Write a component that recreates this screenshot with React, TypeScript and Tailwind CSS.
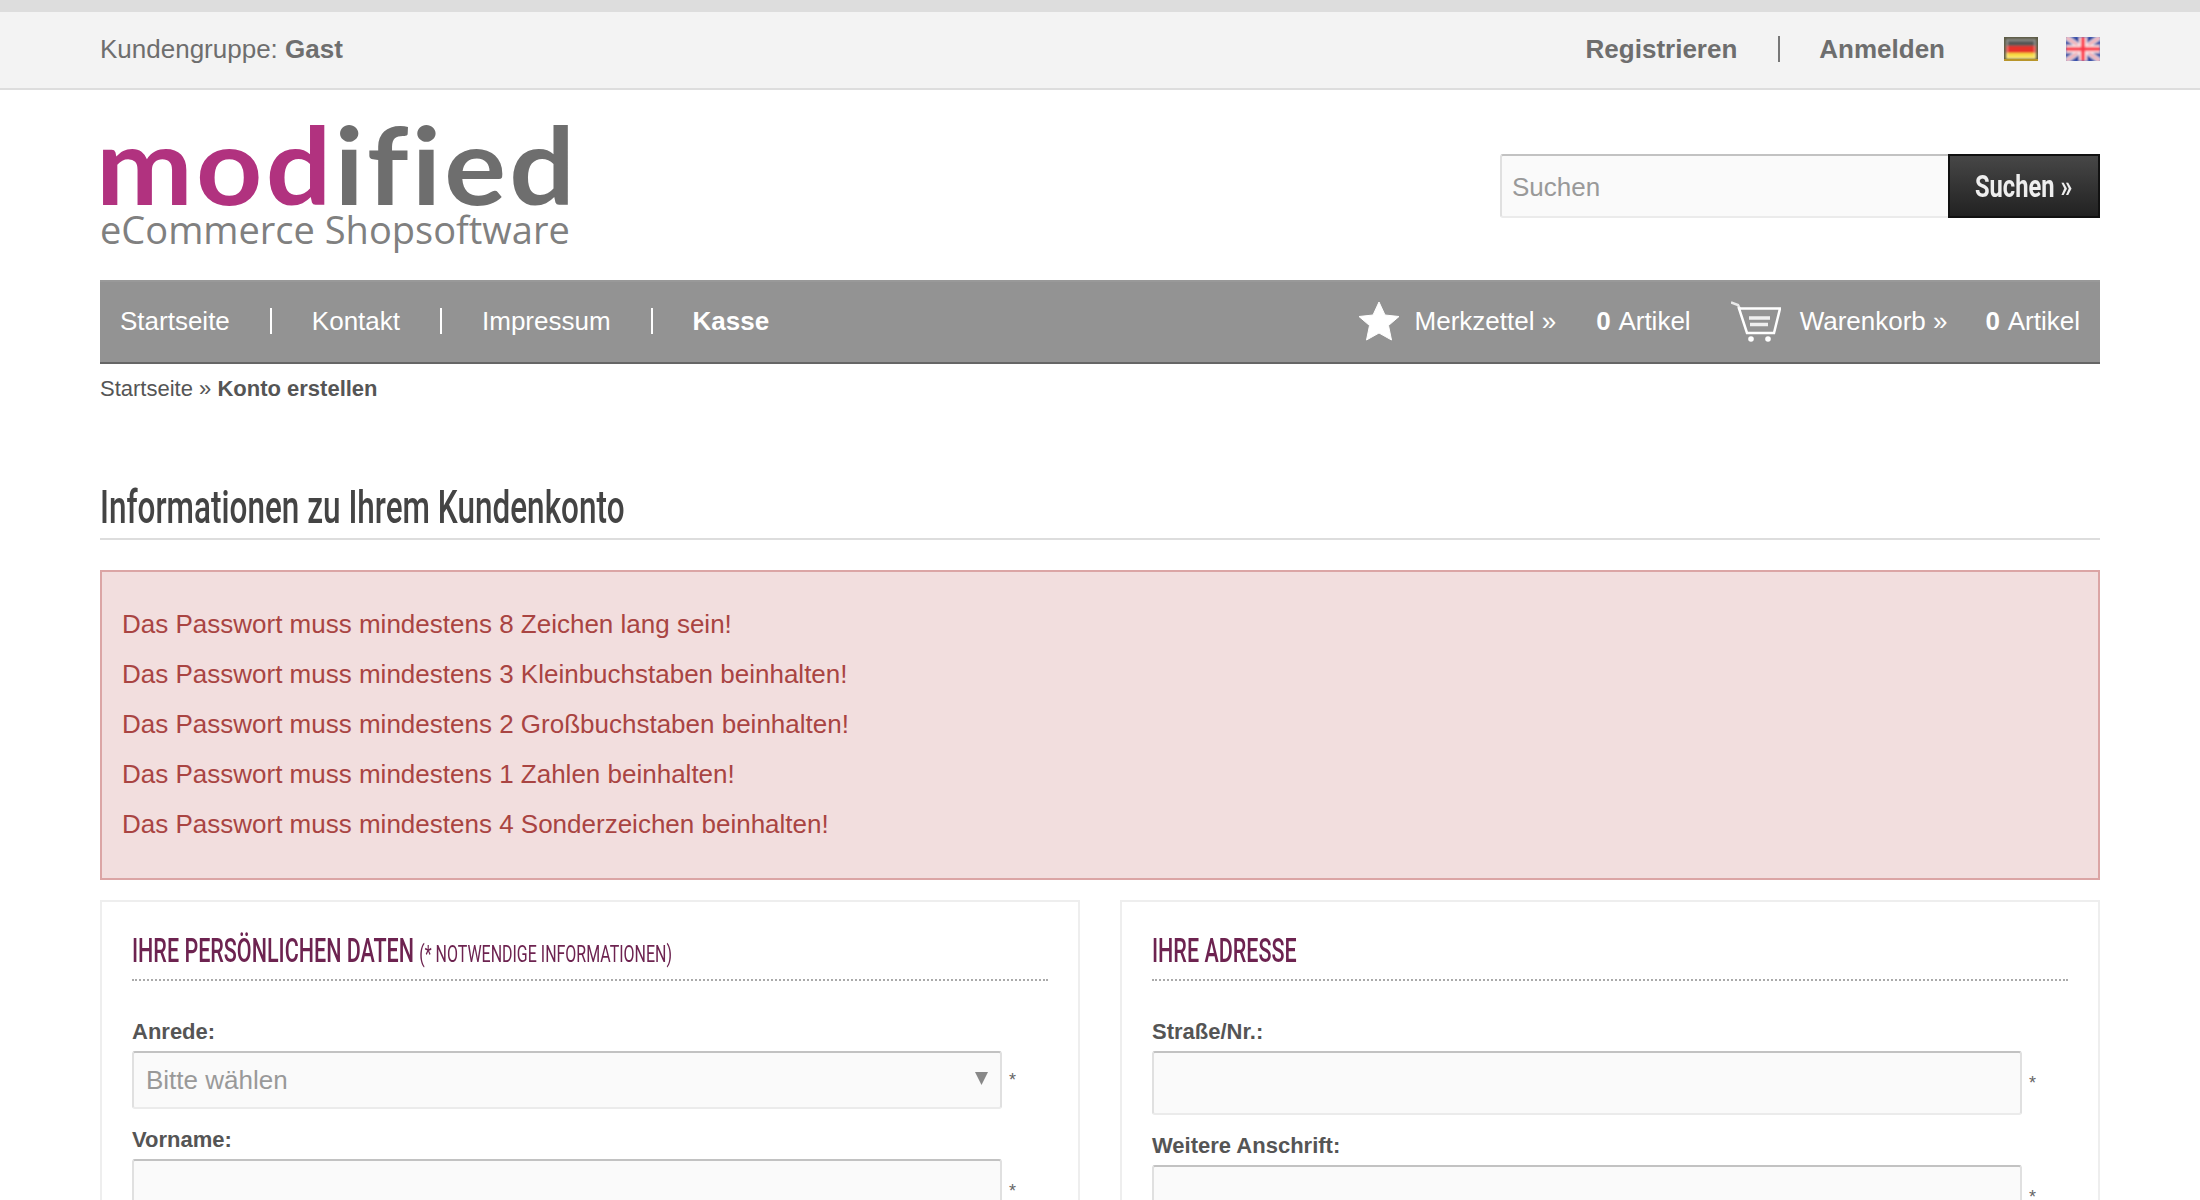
import React from 'react';

const sans = "font-['Liberation_Sans',Arial,sans-serif]";
const condensed = "font-['Roboto',sans-serif] inline-block origin-left whitespace-nowrap";

function FlagDe() {
  return (
    <svg width="34" height="24" viewBox="0 0 34 24">
      <defs>
        <filter id="soft-de"><feGaussianBlur stdDeviation="0.8" /></filter>
      </defs>
      <rect width="34" height="24" fill="#5c5a44" />
      <g filter="url(#soft-de)">
        <rect x="2" y="2" width="30" height="7" fill="#565654" />
        <rect x="2" y="9" width="30" height="7" fill="#e8312a" />
        <rect x="2" y="16" width="30" height="6" fill="#f8dc45" />
        <rect x="3" y="3" width="28" height="18" fill="none" stroke="#fff" strokeOpacity="0.45" strokeWidth="1.5" />
      </g>
      <rect y="22" width="34" height="2" fill="#b8952a" />
    </svg>
  );
}

function FlagGb() {
  return (
    <svg width="34" height="24" viewBox="0 0 34 24">
      <defs>
        <filter id="soft-gb" x="0" y="0" width="1" height="1"><feGaussianBlur stdDeviation="1" /></filter>
      </defs>
      <rect width="34" height="24" fill="#5a73c4" />
      <g filter="url(#soft-gb)">
        <rect width="34" height="24" fill="#24409e" />
        <path d="M0 0L34 24M34 0L0 24" stroke="#f3e6ea" strokeWidth="5" />
        <path d="M0 0L34 24M34 0L0 24" stroke="#f0707c" strokeWidth="1.5" />
        <path d="M17 0V24M0 12H34" stroke="#f7dfe2" strokeWidth="8" />
        <path d="M17 0V24M0 12H34" stroke="#fb3b4c" strokeWidth="4" />
      </g>
    </svg>
  );
}

function StarIcon() {
  return (
    <svg width="42" height="40" viewBox="0 0 42 40" className="shrink-0">
      <path
        d="M21 1L27 14L41 15.500L30.500 24.500L33.500 39L21 32L8.500 39L11.500 24.500L1 15.500L15 14Z"
        fill="#fff"
        stroke="#fff"
        strokeLinejoin="round"
      />
    </svg>
  );
}

function CartIcon() {
  return (
    <svg width="50" height="41" viewBox="0 0 50 41" className="shrink-0" fill="none" stroke="#fff">
      <path d="M0 1.500L7 4L9 8" strokeWidth="2.500" opacity="0.8" />
      <path d="M8 7.500H49L43 32H16Z" strokeWidth="2.500" />
      <path d="M18 17H39M19 23.500H37" strokeWidth="3.500" opacity="0.85" />
      <circle cx="20" cy="38" r="2.800" fill="#fff" stroke="none" />
      <circle cx="37" cy="38" r="2.800" fill="#fff" stroke="none" />
    </svg>
  );
}

const boxBorder = 'rounded-[3px] border-2 border-t-[#c2c2c2] border-x-[#e0e0e0] border-b-[#ebebeb] bg-[#fafafa]';

function Field({ label, gap, select }: { label: string; gap: string; select?: boolean }) {
  return (
    <div className={gap}>
      <label className="block text-[22px] leading-[26px] font-bold text-[#555]">{label}</label>
      <div className="mt-[6px] flex items-center">
        {select ? (
          <div className="relative">
            <select className={`${boxBorder} h-[58px] w-[870px] appearance-none px-[12px] text-[26px] text-[#999]`}>
              <option>Bitte wählen</option>
            </select>
            <svg width="13" height="13" viewBox="0 0 13 13" className="absolute top-[21px] right-[14px]">
              <polygon points="0,0 13,0 6.500,13" fill="#888" />
            </svg>
          </div>
        ) : (
          <input className={`${boxBorder} h-[64px] w-[870px]`} />
        )}
        <span className="ml-[7px] text-[18px] leading-none text-[#666]">*</span>
      </div>
    </div>
  );
}

function CardTitle({ title, note }: { title: string; note?: string }) {
  return (
    <div className="h-[48px] border-b-2 border-dotted border-[#aaa]">
      <h2 className={`${condensed} scale-x-[0.652] text-[33px] leading-[36px] font-medium text-[#6d2350]`}>
        {title}
        {note && <span className="ml-[8px] text-[24.500px] font-normal">{note}</span>}
      </h2>
    </div>
  );
}

const errors = [
  'Das Passwort muss mindestens 8 Zeichen lang sein!',
  'Das Passwort muss mindestens 3 Kleinbuchstaben beinhalten!',
  'Das Passwort muss mindestens 2 Großbuchstaben beinhalten!',
  'Das Passwort muss mindestens 1 Zahlen beinhalten!',
  'Das Passwort muss mindestens 4 Sonderzeichen beinhalten!',
];

export default function App() {
  return (
    <div className={`${sans} h-[1200px] overflow-hidden bg-white text-[26px] text-[#555]`}>
      <div className="h-[12px] bg-[#dddddd]" />
      <div className="h-[78px] border-b-2 border-[#dddddd] bg-[#f3f3f3]">
        <div className="mx-[100px] flex h-[76px] items-center justify-between pb-[2px]">
          <div className="text-[#6e6e6e]">
            Kundengruppe: <b>Gast</b>
          </div>
          <div className="flex items-center font-bold text-[#6e6e6e]">
            <a>Registrieren</a>
            <span className="ml-[41px] mr-[39px] h-[26px] w-[2px] bg-[#777]" />
            <a>Anmelden</a>
            <span className="ml-[59px] mr-[28px] flex"><FlagDe /></span>
            <span className="flex"><FlagGb /></span>
          </div>
        </div>
      </div>

      <div className="mx-[100px]">
        <div className="flex h-[190px] items-start justify-between">
          <div className="w-[480px] pt-[28px]">
            <div className="ml-[-4px] h-[91px] origin-left scale-x-[1.08] whitespace-nowrap font-['Lato',sans-serif] text-[107px] leading-[91px] font-bold tracking-[3px] [font-variant-ligatures:none]">
              <span className="text-[#b1327f]">mod</span>
              <span className="text-[#6e6e6e]">ified</span>
            </div>
            <div className="whitespace-nowrap font-['Open_Sans',sans-serif] text-[38px] leading-[40px] text-[#808080]">
              eCommerce Shopsoftware
            </div>
          </div>
          <div className="mt-[64px] flex h-[64px]">
            <input
              placeholder="Suchen"
              className="h-[64px] w-[448px] rounded-l-[3px] border-2 border-t-[#c2c2c2] border-l-[#e0e0e0] border-b-[#ebebeb] border-r-0 bg-[#fafafa] px-[10px] pt-[2px] text-[26px] placeholder:text-[#999]"
            />
            <button className="h-[64px] w-[152px] overflow-hidden border-2 border-[#111] bg-gradient-to-b from-[#474747] to-[#222222] pl-[25px] text-left text-[#eee]">
              <span className={`${condensed} scale-x-[0.74] text-[32px] font-bold`}>Suchen »</span>
            </button>
          </div>
        </div>

        <nav className="flex h-[84px] items-center justify-between border-t-2 border-b-2 border-t-[#999] border-b-[#666] bg-[#939393] px-[20px] pb-[2px] text-white">
          <div className="flex items-center">
            <a>Startseite</a>
            <span className="mx-[40px] h-[26px] w-[2px] bg-white" />
            <a>Kontakt</a>
            <span className="mx-[40px] h-[26px] w-[2px] bg-white" />
            <a>Impressum</a>
            <span className="mx-[40px] h-[26px] w-[2px] bg-white" />
            <a className="font-bold">Kasse</a>
          </div>
          <div className="flex items-center">
            <StarIcon />
            <a className="ml-[15px]">Merkzettel »</a>
            <span className="ml-[40px]"><b className="mr-[2px]">0</b> Artikel</span>
            <span className="ml-[40px] flex"><CartIcon /></span>
            <a className="ml-[19px]">Warenkorb »</a>
            <span className="ml-[38px]"><b className="mr-[2px]">0</b> Artikel</span>
          </div>
        </nav>

        <div className="mt-[12px] text-[22px] leading-[26px] text-[#555]">
          Startseite » <b>Konto erstellen</b>
        </div>

        <div className="mt-[81px] h-[57px] border-b-2 border-[#dddddd]">
          <h1 className={`${condensed} scale-x-[0.685] text-[46px] leading-[48px] font-medium text-[#444]`}>
            Informationen zu Ihrem Kundenkonto
          </h1>
        </div>

        <div className="mt-[30px] h-[310px] border-2 border-[#dba5a5] bg-[#f2dede] px-[20px] pt-[27px] text-[#a94442]">
          {errors.map((e) => (
            <p key={e} className="h-[50px] leading-[50px]">{e}</p>
          ))}
        </div>

        <div className="mt-[20px] flex justify-between">
          <div className="h-[400px] w-[980px] border-2 border-[#eeeeee] px-[30px] pt-[31px]">
            <CardTitle title="IHRE PERSÖNLICHEN DATEN" note="(* NOTWENDIGE INFORMATIONEN)" />
            <Field label="Anrede:" select gap="mt-[38px]" />
            <Field label="Vorname:" gap="mt-[18px]" />
          </div>
          <div className="h-[400px] w-[980px] border-2 border-[#eeeeee] px-[30px] pt-[31px]">
            <CardTitle title="IHRE ADRESSE" />
            <Field label="Straße/Nr.:" gap="mt-[38px]" />
            <Field label="Weitere Anschrift:" gap="mt-[18px]" />
          </div>
        </div>
      </div>
    </div>
  );
}
